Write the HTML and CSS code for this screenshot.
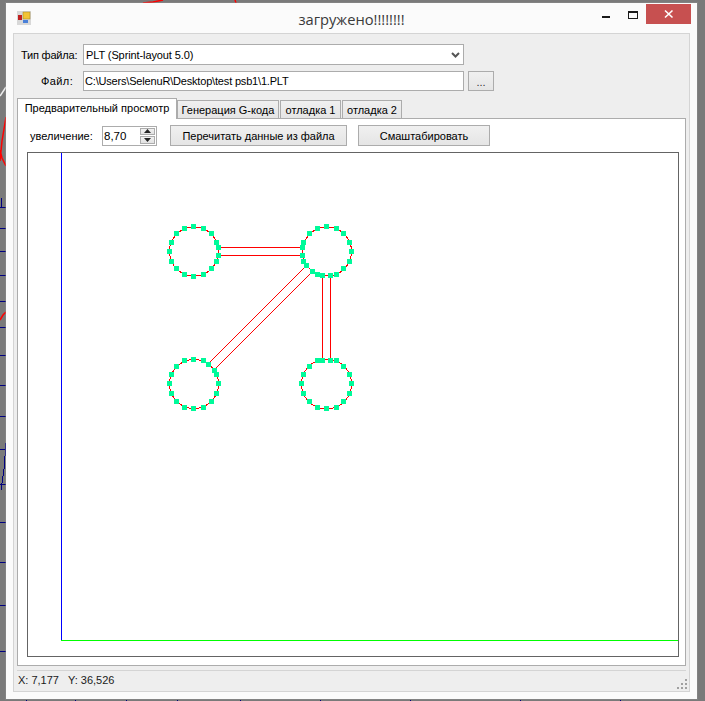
FILE: index.html
```html
<!DOCTYPE html>
<html lang="ru">
<head>
<meta charset="utf-8">
<title>загружено!!!!!!!!</title>
<link rel="stylesheet" href="styles.css">
</head>
<body>
<div class="desktop">
  <svg class="wallpaper" width="705" height="701" viewBox="0 0 705 701">
    <g class="wp-red">
      <path d="M143 3l10-1 10-2M236 3l-1-3M706 0"/>
      <path d="M6 117l-4 24-2 20M0 150l2 8 4 8M0 320l3-5 3-3"/>
    </g>
    <path class="wp-white" d="M0 96l6-9"/>
    <path class="wp-blue" d="M0 207h6M1 207v-0M0 228h6M0 251h6M0 275h6M0 301h6M0 327h6M0 355h6M0 385h6M0 416h6M0 449h6M6 443l-2 26-3 21M0 484h6M0 522h6M0 562h6M0 605h6M0 651h6M1 207v-9M26 700v1M75 700v1M126 700v1M177 700v1M240 700v1M320 700v1M410 700v1M520 700v1M620 700v1"/>
  </svg>
  <div class="window">
    <header class="titlebar">
      <svg class="app-icon" width="14" height="14" viewBox="0 0 14 14">
        <rect class="ic-frame" x="0" y="0" width="14" height="14"/>
        <rect class="ic-yellow" x="6" y="1" width="7" height="7"/>
        <rect class="ic-red" x="1" y="4" width="4" height="5"/>
        <rect class="ic-blue" x="6" y="9" width="5" height="3"/>
      </svg>
      <h1 class="title">загружено!!!!!!!!</h1>
      <div class="controls">
        <span class="ctl-min"></span>
        <span class="ctl-max"></span>
        <span class="ctl-close">
          <svg width="10" height="10" viewBox="0 0 10 10"><path class="ctl-x" d="M1 1.5l7.5 7M8.5 1.5l-7.5 7"/></svg>
        </span>
      </div>
    </header>
    <main class="client">
      <div class="form-row row-type">
        <label class="lbl lbl-type">Тип файла:</label>
        <div class="combo">
          <span class="combo-text">PLT (Sprint-layout 5.0)</span>
          <svg width="9" height="6" viewBox="0 0 9 6"><path class="chev" d="M1 1l3.5 3.5L8 1"/></svg>
        </div>
      </div>
      <div class="form-row row-file">
        <label class="lbl lbl-file">Файл:</label>
        <div class="textbox"><span class="path-text">C:\Users\SelenuR\Desktop\test psb1\1.PLT</span></div>
        <button class="btn btn-browse">...</button>
      </div>
      <nav class="tabs">
        <span class="tab tab-active">Предварительный просмотр</span>
        <span class="tab tab-gen">Генерация G-кода</span>
        <span class="tab tab-d1">отладка 1</span>
        <span class="tab tab-d2">отладка 2</span>
      </nav>
      <section class="panel">
        <div class="toolbar">
          <span class="lbl lbl-zoom">увеличение:</span>
          <div class="spinner">
            <span class="spin-val">8,70</span>
            <span class="spin-btns">
              <span class="spin-btn"><svg width="7" height="4" viewBox="0 0 7 4"><path class="spin-tri" d="M3.5 0L7 4H0z"/></svg></span>
              <span class="spin-btn"><svg width="7" height="4" viewBox="0 0 7 4"><path class="spin-tri" d="M0 0h7L3.5 4z"/></svg></span>
            </span>
          </div>
          <button class="btn btn-reread">Перечитать данные из файла</button>
          <button class="btn btn-scale">Смаштабировать</button>
        </div>
        <div class="picture">
          <svg class="board" width="650" height="503" viewBox="28 153 650 503">
            <path class="axis-y" d="M61.5 153V640"/>
            <path class="axis-x" d="M61 640.5H678"/>
            <g class="trace">
              <circle cx="194" cy="251.5" r="24.5"/>
              <circle cx="327" cy="251.5" r="24.5"/>
              <circle cx="194" cy="384" r="24.5"/>
              <circle cx="326.5" cy="384" r="25"/>
              <path d="M219 247.5H302M219 255.5H302M322.5 275V360M330.5 275V360M210 362L304 268M216 368L310 274"/>
            </g>
            <g class="pads">
              <rect x="191" y="224"/><rect x="201" y="226"/><rect x="209" y="231"/><rect x="214" y="240"/><rect x="216" y="245"/><rect x="216" y="253"/><rect x="214" y="259"/><rect x="209" y="266"/><rect x="201" y="272"/><rect x="191" y="274"/><rect x="182" y="272"/><rect x="174" y="266"/><rect x="169" y="259"/><rect x="167" y="249"/><rect x="169" y="240"/><rect x="174" y="231"/><rect x="182" y="226"/>
              <rect x="324" y="224"/><rect x="334" y="226"/><rect x="341" y="231"/><rect x="347" y="240"/><rect x="349" y="249"/><rect x="347" y="259"/><rect x="341" y="266"/><rect x="334" y="272"/><rect x="328" y="273"/><rect x="320" y="273"/><rect x="315" y="272"/><rect x="310" y="269"/><rect x="304" y="263"/><rect x="301" y="259"/><rect x="300" y="253"/><rect x="300" y="245"/><rect x="301" y="240"/><rect x="307" y="231"/><rect x="315" y="226"/>
              <rect x="191" y="357"/><rect x="201" y="358"/><rect x="206" y="362"/><rect x="212" y="368"/><rect x="214" y="372"/><rect x="216" y="381"/><rect x="214" y="391"/><rect x="209" y="399"/><rect x="201" y="405"/><rect x="191" y="406"/><rect x="182" y="405"/><rect x="174" y="399"/><rect x="169" y="391"/><rect x="167" y="381"/><rect x="169" y="372"/><rect x="174" y="364"/><rect x="182" y="358"/>
              <rect x="315" y="358"/><rect x="320" y="358"/><rect x="328" y="358"/><rect x="334" y="358"/><rect x="341" y="364"/><rect x="347" y="372"/><rect x="349" y="381"/><rect x="347" y="391"/><rect x="341" y="399"/><rect x="334" y="405"/><rect x="324" y="406"/><rect x="315" y="405"/><rect x="307" y="399"/><rect x="301" y="391"/><rect x="299" y="381"/><rect x="301" y="372"/><rect x="307" y="364"/>
            </g>
          </svg>
        </div>
      </section>
      <footer class="status">
        <span class="coord">X: 7,177</span>
        <span class="coord">Y: 36,526</span>
        <svg class="grip" width="11" height="11" viewBox="0 0 11 11">
          <rect x="8" y="0" width="2" height="2"/><rect x="4" y="4" width="2" height="2"/><rect x="8" y="4" width="2" height="2"/><rect x="0" y="8" width="2" height="2"/><rect x="4" y="8" width="2" height="2"/><rect x="8" y="8" width="2" height="2"/>
        </svg>
      </footer>
    </main>
  </div>
</div>
</body>
</html>
```
FILE: styles.css
```css
* { box-sizing: border-box; }
html, body { margin: 0; padding: 0; }
body { font-family: "Liberation Sans", Arial, sans-serif; font-size: 11px; color: #000; }

.desktop { position: relative; width: 705px; height: 701px; overflow: hidden; background: #7a7a7a; }
.wallpaper { position: absolute; left: 0; top: 0; }
.wallpaper path { fill: none; }
.wp-red path { stroke: #ff0000; stroke-width: 1.5; }
.wp-white { stroke: #eeeeee; stroke-width: 1.5; }
.wp-blue { stroke: #00007f; stroke-width: 1; shape-rendering: crispEdges; }

.window {
  position: absolute; left: 6px; top: 3px; width: 691px; height: 696px;
  background: #fbfbfb; padding: 0 7px 7px; display: flex; flex-direction: column;
  box-shadow: 0 0 0 1px rgba(150,150,150,.35);
}

.titlebar { position: relative; height: 30px; flex: none; display: flex; align-items: center; justify-content: center; }
.app-icon { position: absolute; left: 4px; top: 8px; }
.ic-frame { fill: #d8d8d8; }
.ic-yellow { fill: #f2c335; stroke: #a08020; stroke-width: .5; }
.ic-red { fill: #c02020; }
.ic-blue { fill: #4a80d8; }
.title { margin: 0; font-family: "Open Sans", sans-serif; font-size: 14.7px; font-weight: 400; color: #3a3a3a; line-height: 30px; position: relative; top: 1px; }
.controls { position: absolute; right: -1px; top: 1px; display: flex; align-items: flex-start; }
.ctl-min { width: 8px; height: 2px; background: #1a1a1a; margin: 12px 18px 0 0; }
.ctl-max { width: 10px; height: 8px; border: 1px solid #1a1a1a; border-top-width: 2px; margin: 7px 8px 0 0; }
.ctl-close { width: 45px; height: 20px; background: #c75050; display: flex; align-items: center; justify-content: center; }
.ctl-x { stroke: #fff; stroke-width: 1.6; fill: none; }

.client { flex: 1; min-height: 0; border: 1px solid #d4d4d4; background: #eeeeee; display: flex; flex-direction: column; padding: 10px 3px 0; }

.form-row { display: flex; align-items: center; flex: none; }
.row-type { height: 21px; }
.row-file { height: 20px; margin-top: 6px; }
.lbl { white-space: nowrap; }
.lbl-type { margin-left: 4px; width: 62px; letter-spacing: -0.2px; }
.lbl-file { margin-left: 24px; width: 42px; letter-spacing: 0.4px; }

.combo, .textbox {
  width: 381px; background: #fff; border: 1px solid #acacac; display: flex; align-items: center;
  padding: 0 2px 0 2px; height: 100%; white-space: nowrap;
}
.combo { justify-content: space-between; padding-right: 3px; }
.combo-text { letter-spacing: -0.1px; }
.path-text { letter-spacing: -0.18px; margin-left: -1px; }
.chev { fill: none; stroke: #555; stroke-width: 2; }

.btn {
  font: inherit; color: #000; border: 1px solid #acacac; padding: 0; border-radius: 0;
  background: linear-gradient(#f0f0f0, #e5e5e5); white-space: nowrap;
}
.btn-browse { width: 26px; height: 20px; margin-left: 4px; padding-top: 2px; color: #333; }

.tabs { display: flex; align-items: flex-end; height: 20px; margin-top: 7px; flex: none; position: relative; z-index: 1; }
.tab { height: 18px; border: 1px solid #acacac; border-bottom: 0; background: linear-gradient(#f0f0f0, #e5e5e5); display: flex; align-items: center; justify-content: center; white-space: nowrap; margin-left: 1px; }
.tab-active { width: 160px; height: 21px; margin: 0 0 -1px 0; background: #fff; padding-bottom: 3px; }
.tab-gen { width: 102px; margin-left: 0; }
.tab-d1 { width: 61px; }
.tab-d2 { width: 60px; }

.panel { height: 548px; flex: none; background: #fff; border: 1px solid #acacac; padding: 6px 8px 8px 9px; display: flex; flex-direction: column; }
.toolbar { display: flex; align-items: center; height: 21px; flex: none; }
.lbl-zoom { margin-left: 3px; width: 72px; }
.spinner { width: 55px; height: 20px; border: 1px solid #acacac; display: flex; align-items: center; justify-content: space-between; padding: 1px 1px 1px 0; }
.spin-val { padding-left: 1px; font-size: 11.5px; }
.spin-btns { width: 15px; height: 100%; display: flex; flex-direction: column; gap: 1px; }
.spin-btn { flex: 1; background: linear-gradient(#f0f0f0, #e2e2e2); border: 1px solid #acacac; display: flex; align-items: center; justify-content: center; }
.spin-tri { fill: #222; }
.btn-reread { width: 177px; height: 21px; margin-left: 13px; }
.btn-scale { width: 132px; height: 21px; margin-left: 11px; }

.picture { margin-top: 6px; width: 652px; height: 505px; border: 1px solid #646464; flex: none; }
.board { display: block; }
.axis-y { stroke: #0000ff; stroke-width: 1; fill: none; shape-rendering: crispEdges; }
.axis-x { stroke: #00ff00; stroke-width: 1; fill: none; shape-rendering: crispEdges; }
.trace circle, .trace path { fill: none; stroke: #ff0000; stroke-width: 1; shape-rendering: crispEdges; }
.pads rect { width: 5px; height: 5px; fill: #00fa9a; }

.status { margin-top: 4px; flex: 1; border-top: 1px solid #d4d4d4; display: flex; align-items: center; padding: 0 0 3px 1px; position: relative; gap: 9px; }
.coord { font-size: 11px; color: #1a1a1a; }
.grip { position: absolute; right: -2px; bottom: 1px; }
.grip rect { fill: #a0a0a0; }
```
